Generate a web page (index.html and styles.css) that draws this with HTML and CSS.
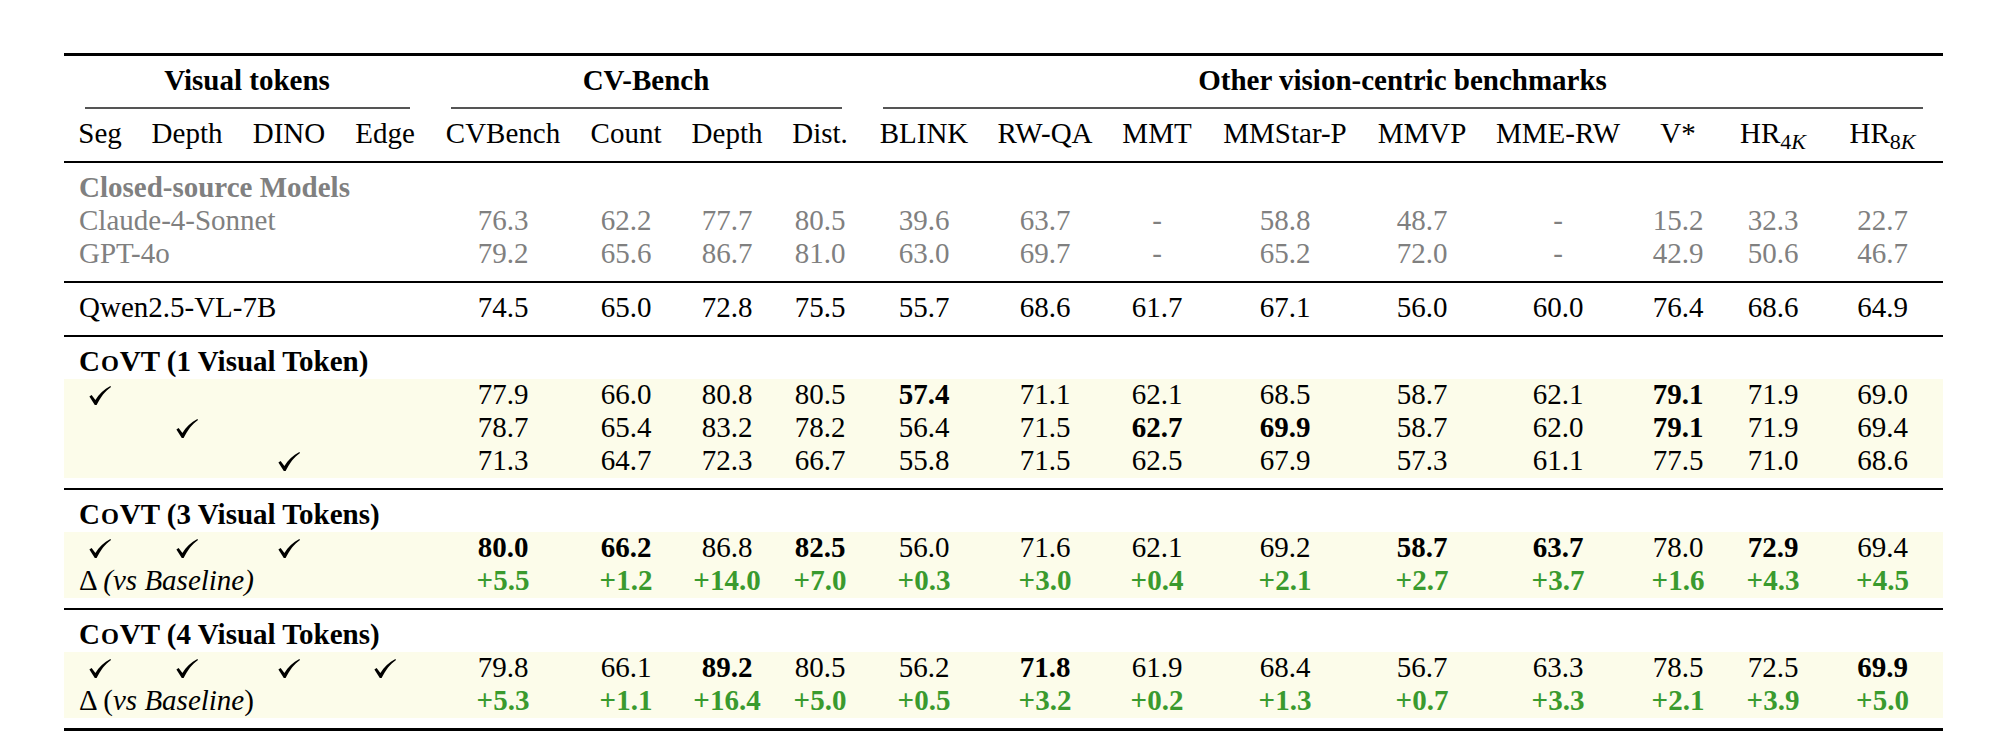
FILE: index.html
```html
<!DOCTYPE html>
<html lang="en">
<head>
<meta charset="utf-8">
<title>CoVT results table</title>
<link rel="stylesheet" href="styles.css">
</head>
<body>
<svg class="defs" width="0" height="0" aria-hidden="true">
  <symbol id="ck" viewBox="0 0 22 19">
    <path d="M0.4 10.6 L2.6 9.1 L6.4 13.9 C10 8 15 3.4 21.4 0 L22 0.9 C16 5.2 11.6 10.8 7.6 19 L5.8 19 Z"/>
  </symbol>
</svg>
<div class="page">
  <div class="tbl">
    <div class="head">
      <div class="row">
        <span class="c b g1">Visual tokens</span>
        <span class="c b g2">CV-Bench</span>
        <span class="c b g3">Other vision-centric benchmarks</span>
      </div>
      <div class="row cmid">
        <span class="cm g1"></span>
        <span class="cm g2"></span>
        <span class="cm g3"></span>
      </div>
      <div class="row">
        <span class="c">Seg</span><span class="c">Depth</span><span class="c">DINO</span><span class="c">Edge</span>
        <span class="c">CVBench</span><span class="c">Count</span><span class="c">Depth</span><span class="c">Dist.</span>
        <span class="c">BLINK</span><span class="c">RW-QA</span><span class="c">MMT</span><span class="c">MMStar-P</span>
        <span class="c">MMVP</span><span class="c">MME-RW</span><span class="c">V*</span>
        <span class="c">HR<sub>4<i>K</i></sub></span><span class="c">HR<sub>8<i>K</i></sub></span>
      </div>
    </div>

    <div class="sec muted">
      <div class="row"><span class="c name b">Closed-source Models</span></div>
      <div class="row">
        <span class="c name">Claude-4-Sonnet</span>
        <span class="c">76.3</span><span class="c">62.2</span><span class="c">77.7</span><span class="c">80.5</span>
        <span class="c">39.6</span><span class="c">63.7</span><span class="c">-</span><span class="c">58.8</span>
        <span class="c">48.7</span><span class="c">-</span><span class="c">15.2</span><span class="c">32.3</span><span class="c">22.7</span>
      </div>
      <div class="row">
        <span class="c name">GPT-4o</span>
        <span class="c">79.2</span><span class="c">65.6</span><span class="c">86.7</span><span class="c">81.0</span>
        <span class="c">63.0</span><span class="c">69.7</span><span class="c">-</span><span class="c">65.2</span>
        <span class="c">72.0</span><span class="c">-</span><span class="c">42.9</span><span class="c">50.6</span><span class="c">46.7</span>
      </div>
    </div>

    <div class="sec">
      <div class="row">
        <span class="c name">Qwen2.5-VL-7B</span>
        <span class="c">74.5</span><span class="c">65.0</span><span class="c">72.8</span><span class="c">75.5</span>
        <span class="c">55.7</span><span class="c">68.6</span><span class="c">61.7</span><span class="c">67.1</span>
        <span class="c">56.0</span><span class="c">60.0</span><span class="c">76.4</span><span class="c">68.6</span><span class="c">64.9</span>
      </div>
    </div>

    <div class="sec">
      <div class="row"><span class="c name b">C<span class="sc">o</span>VT (1 Visual Token)</span></div>
      <div class="row hl">
        <span class="c"><svg class="ck"><use href="#ck"/></svg></span><span class="c"></span><span class="c"></span><span class="c"></span>
        <span class="c">77.9</span><span class="c">66.0</span><span class="c">80.8</span><span class="c">80.5</span>
        <span class="c b">57.4</span><span class="c">71.1</span><span class="c">62.1</span><span class="c">68.5</span>
        <span class="c">58.7</span><span class="c">62.1</span><span class="c b">79.1</span><span class="c">71.9</span><span class="c">69.0</span>
      </div>
      <div class="row hl">
        <span class="c"></span><span class="c"><svg class="ck"><use href="#ck"/></svg></span><span class="c"></span><span class="c"></span>
        <span class="c">78.7</span><span class="c">65.4</span><span class="c">83.2</span><span class="c">78.2</span>
        <span class="c">56.4</span><span class="c">71.5</span><span class="c b">62.7</span><span class="c b">69.9</span>
        <span class="c">58.7</span><span class="c">62.0</span><span class="c b">79.1</span><span class="c">71.9</span><span class="c">69.4</span>
      </div>
      <div class="row hl">
        <span class="c"></span><span class="c"></span><span class="c"><svg class="ck"><use href="#ck"/></svg></span><span class="c"></span>
        <span class="c">71.3</span><span class="c">64.7</span><span class="c">72.3</span><span class="c">66.7</span>
        <span class="c">55.8</span><span class="c">71.5</span><span class="c">62.5</span><span class="c">67.9</span>
        <span class="c">57.3</span><span class="c">61.1</span><span class="c">77.5</span><span class="c">71.0</span><span class="c">68.6</span>
      </div>
    </div>

    <div class="sec">
      <div class="row"><span class="c name b">C<span class="sc">o</span>VT (3 Visual Tokens)</span></div>
      <div class="row hl">
        <span class="c"><svg class="ck"><use href="#ck"/></svg></span><span class="c"><svg class="ck"><use href="#ck"/></svg></span><span class="c"><svg class="ck"><use href="#ck"/></svg></span><span class="c"></span>
        <span class="c b">80.0</span><span class="c b">66.2</span><span class="c">86.8</span><span class="c b">82.5</span>
        <span class="c">56.0</span><span class="c">71.6</span><span class="c">62.1</span><span class="c">69.2</span>
        <span class="c b">58.7</span><span class="c b">63.7</span><span class="c">78.0</span><span class="c b">72.9</span><span class="c">69.4</span>
      </div>
      <div class="row hl gain">
        <span class="c name">Δ <i>(vs Baseline)</i></span>
        <span class="c">+5.5</span><span class="c">+1.2</span><span class="c">+14.0</span><span class="c">+7.0</span>
        <span class="c">+0.3</span><span class="c">+3.0</span><span class="c">+0.4</span><span class="c">+2.1</span>
        <span class="c">+2.7</span><span class="c">+3.7</span><span class="c">+1.6</span><span class="c">+4.3</span><span class="c">+4.5</span>
      </div>
    </div>

    <div class="sec">
      <div class="row"><span class="c name b">C<span class="sc">o</span>VT (4 Visual Tokens)</span></div>
      <div class="row hl">
        <span class="c"><svg class="ck"><use href="#ck"/></svg></span><span class="c"><svg class="ck"><use href="#ck"/></svg></span><span class="c"><svg class="ck"><use href="#ck"/></svg></span><span class="c"><svg class="ck"><use href="#ck"/></svg></span>
        <span class="c">79.8</span><span class="c">66.1</span><span class="c b">89.2</span><span class="c">80.5</span>
        <span class="c">56.2</span><span class="c b">71.8</span><span class="c">61.9</span><span class="c">68.4</span>
        <span class="c">56.7</span><span class="c">63.3</span><span class="c">78.5</span><span class="c">72.5</span><span class="c b">69.9</span>
      </div>
      <div class="row hl gain">
        <span class="c name">Δ (<i>vs Baseline</i>)</span>
        <span class="c">+5.3</span><span class="c">+1.1</span><span class="c">+16.4</span><span class="c">+5.0</span>
        <span class="c">+0.5</span><span class="c">+3.2</span><span class="c">+0.2</span><span class="c">+1.3</span>
        <span class="c">+0.7</span><span class="c">+3.3</span><span class="c">+2.1</span><span class="c">+3.9</span><span class="c">+5.0</span>
      </div>
    </div>
  </div>
</div>
</body>
</html>
```

FILE: styles.css
```css
* {
  box-sizing: border-box;
  margin: 0;
  padding: 0;
}

html,
body {
  background: #ffffff;
}

body {
  font-family: "Liberation Serif", "Times New Roman", serif;
  font-size: 29px;
  color: #000000;
}

.defs {
  position: absolute;
  width: 0;
  height: 0;
  overflow: hidden;
}

.page {
  padding: 53px 0 0 64px;
}

.tbl {
  --cols: 72px 102px 102px 90px 146px 100px 102px 84px 124px 118px 106px 150px 124px 148px 92px 98px 121px;
  width: 1879px;
  border-top: 3px solid #000;
  border-bottom: 3px solid #000;
}

.head {
  padding: 9px 0 10px;
}

.sec {
  border-top: 2px solid #000;
  padding: 9px 0 10px;
}

.row {
  display: grid;
  grid-template-columns: var(--cols);
  height: 33px;
}

.c {
  text-align: center;
  line-height: 30px;
  padding-bottom: 3px;
  white-space: nowrap;
}

.b {
  font-weight: bold;
}

.name {
  grid-column: span 4;
  text-align: left;
  padding-left: 15px;
}

.g1 {
  grid-column: span 4;
}

.g2 {
  grid-column: span 4;
}

.g3 {
  grid-column: span 9;
}

.cmid {
  height: 2px;
  margin: 9px 0;
}

.cm {
  background: #555;
  margin: 0 20px 0 21px;
}

.muted {
  color: #808080;
}

.hl {
  background: #fcfcea;
}

.gain .c:not(.name) {
  color: #3a9a2e;
  font-weight: bold;
}

.sc {
  text-transform: uppercase;
  font-size: 23px;
  margin: 0 1px;
}

sub {
  font-size: 22px;
  line-height: 0;
  vertical-align: -6px;
}

sub i {
  font-style: italic;
}

.ck {
  width: 22px;
  height: 19px;
  vertical-align: -1px;
  fill: #000;
}
```
